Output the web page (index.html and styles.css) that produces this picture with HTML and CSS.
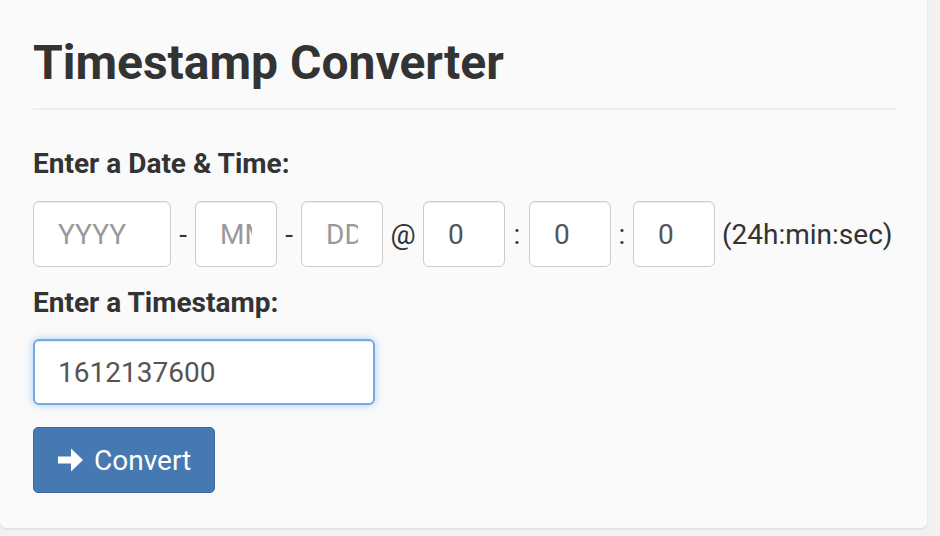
FILE: index.html
```html
<!DOCTYPE html>
<html lang="en">
<head>
<meta charset="utf-8">
<title>Timestamp Converter</title>
<link rel="stylesheet" href="styles.css">
</head>
<body>
<div class="card">
  <h1 class="title">Timestamp Converter</h1>
  <hr class="rule">
  <label class="label">Enter a Date &amp; Time:</label>
  <div class="date-row">
    <input class="field field-year" type="text" placeholder="YYYY">
    <span class="sep sep-dash">-</span>
    <input class="field field-small" type="text" placeholder="MM">
    <span class="sep sep-dash">-</span>
    <input class="field field-small" type="text" placeholder="DD">
    <span class="sep sep-at">@</span>
    <input class="field field-small" type="text" value="0">
    <span class="sep sep-colon">:</span>
    <input class="field field-small" type="text" value="0">
    <span class="sep sep-colon2">:</span>
    <input class="field field-small" type="text" value="0">
    <span class="hint">(24h:min:sec)</span>
  </div>
  <label class="label label-ts">Enter a Timestamp:</label>
  <div class="ts-row">
    <input class="field field-ts" type="text" value="1612137600">
  </div>
  <button class="btn" type="button">
    <svg class="arrow" width="25" height="24" viewBox="0 0 25 24"><path d="M0 8.5H13V0.5L25 12L13 23.5V15.5H0Z" fill="#fff"/></svg>
    <span>Convert</span>
  </button>
</div>
</body>
</html>
```
FILE: styles.css
```css
html, body {
  margin: 0;
  padding: 0;
  background: #f1f1f1;
}
body {
  font-family: Roboto, "Helvetica Neue", Arial, sans-serif;
  color: #333;
  width: 940px;
  height: 536px;
  overflow: hidden;
}
.card {
  width: 927px;
  box-sizing: border-box;
  background: #fafafa;
  padding: 35px 30px 35px 33px;
  border-radius: 0 0 6px 6px;
  box-shadow: 0 1px 3px rgba(0,0,0,0.09);
}
.title {
  margin: 0;
  font-size: 48px;
  line-height: 56px;
  font-weight: 700;
  color: #333;
}
.rule {
  margin: 17px 0 0 0;
  border: 0;
  border-top: 2px solid #eee;
  height: 0;
}
.label {
  display: block;
  margin-top: 36px;
  font-size: 28px;
  line-height: 36px;
  font-weight: 700;
  color: #333;
}
.label-ts {
  margin-top: 18px;
}
.date-row {
  display: flex;
  align-items: center;
  margin-top: 19px;
  height: 66px;
}
.field {
  box-sizing: border-box;
  height: 66px;
  margin: 0;
  padding: 0 24px;
  border: 1px solid #ccc;
  border-radius: 6px;
  background: #fff;
  font-family: Roboto, "Helvetica Neue", Arial, sans-serif;
  font-size: 28px;
  color: #555;
  box-shadow: inset 0 1px 1px rgba(0,0,0,0.075);
  outline: none;
}
.field::placeholder {
  color: #999;
}
.field-year {
  width: 138px;
}
.field-small {
  width: 82px;
}
.sep {
  font-size: 28px;
  color: #333;
  text-align: center;
  flex: none;
}
.sep-dash {
  width: 24px;
}
.sep-at {
  width: 40px;
}
.sep-colon {
  width: 24px;
}
.sep-colon2 {
  width: 22px;
}
.hint {
  margin-left: 7px;
  font-size: 28px;
  color: #333;
  white-space: nowrap;
}
.ts-row {
  margin-top: 18px;
}
.field-ts {
  width: 342px;
  border: 2px solid #74a9e6;
  padding-left: 23px;
  box-shadow: inset 0 1px 1px rgba(0,0,0,0.075), 0 0 8px rgba(102,175,233,0.55);
}
.btn {
  display: flex;
  align-items: center;
  gap: 11px;
  margin-top: 22px;
  height: 66px;
  width: 182px;
  box-sizing: border-box;
  padding: 0 0 0 24px;
  background: #4679b1;
  border: 1px solid #3b6ca3;
  border-radius: 5px;
  color: #fff;
  font-family: Roboto, "Helvetica Neue", Arial, sans-serif;
  font-size: 28px;
  cursor: pointer;
}
.arrow {
  flex: none;
}
```
